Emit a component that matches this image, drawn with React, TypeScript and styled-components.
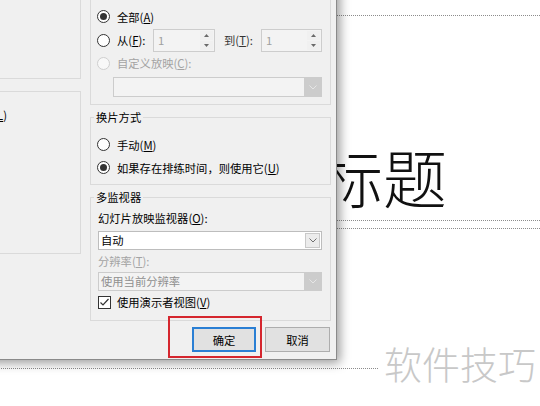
import React from "react";
import styled, { createGlobalStyle } from "styled-components";

const GlobalStyle = createGlobalStyle`
  html, body { margin: 0; padding: 0; background: #fff; }
  body {
    width: 540px; height: 406px; overflow: hidden;
    font-family: "Noto Sans CJK SC", "Noto Sans", sans-serif;
  }
`;

const Page = styled.div`
  position: relative;
  width: 540px;
  height: 406px;
  overflow: hidden;
  background: #fff;
`;

/* ---- slide canvas objects ---- */
const Placeholder = styled.div<{ $top: number; $height: number }>`
  position: absolute;
  left: -100px;
  width: 700px;
  top: ${(p) => p.$top}px;
  height: ${(p) => p.$height}px;
  box-sizing: border-box;
  border: 1px dotted #8c8c8c;
`;

const SlideTitle = styled.div`
  position: absolute;
  left: 319px;
  top: 143px;
  font-size: 64px;
  line-height: 64px;
  font-weight: 300;
  color: #111;
  white-space: nowrap;
  z-index: 1;
`;

const Watermark = styled.div`
  position: absolute;
  left: 378px;
  top: 344px;
  padding: 0 4px 0 6px;
  font-size: 38px;
  line-height: 38px;
  font-weight: 300;
  color: #c8c8c8;
  background: #fff;
  white-space: nowrap;
  z-index: 1;
`;

/* ---- dialog ---- */
const Dialog = styled.div`
  position: absolute;
  left: -300px;
  top: -40px;
  width: 637px;
  height: 400px;
  box-sizing: border-box;
  background: #f0f0f0;
  border: 1px solid #8a8a8a;
  box-shadow: 3px 3px 10px rgba(0, 0, 0, 0.4);
  display: flex;
  flex-direction: column;
  font-size: 11.3px;
  color: #000;
  z-index: 2;
`;

const DialogBody = styled.div`
  display: grid;
  grid-template-columns: 1fr 241px;
  column-gap: 9px;
  padding: 33px 5px 0 0;
`;

const Column = styled.div`
  display: flex;
  flex-direction: column;
  gap: 12px;
`;

const Group = styled.div<{ $height: number; $pad: string }>`
  position: relative;
  box-sizing: border-box;
  height: ${(p) => p.$height}px;
  border: 1px solid #dadada;
  padding: ${(p) => p.$pad};
  display: flex;
  flex-direction: column;
`;

const Legend = styled.span`
  position: absolute;
  top: -8px;
  left: 3px;
  padding: 0 2px;
  line-height: 14px;
  background: #f0f0f0;
  color: #000;
`;

const OptionRow = styled.div<{ $h: number; $end?: boolean; $pr?: number; $mt?: number }>`
  display: flex;
  align-items: center;
  gap: 7px;
  height: ${(p) => p.$h}px;
  margin-top: ${(p) => p.$mt ?? 0}px;
  justify-content: ${(p) => (p.$end ? "flex-end" : "flex-start")};
  padding-right: ${(p) => p.$pr ?? 0}px;
  white-space: nowrap;
`;

const Text = styled.span<{ $disabled?: boolean; $w?: number; $ml?: number; $color?: string }>`
  color: ${(p) => (p.$disabled ? "#a3a3a3" : p.$color ?? "#000")};
  line-height: 16px;
  white-space: nowrap;
  ${(p) => (p.$w ? `width: ${p.$w}px; flex: none;` : "")}
  margin-left: ${(p) => p.$ml ?? 0}px;
`;

const FieldLabel = styled.div<{ $mt: number; $disabled?: boolean }>`
  margin-top: ${(p) => p.$mt}px;
  height: 16px;
  line-height: 16px;
  color: ${(p) => (p.$disabled ? "#a3a3a3" : "#000")};
  white-space: nowrap;
`;

const RadioCircle = styled.span<{ $checked?: boolean; $disabled?: boolean }>`
  width: 13px;
  height: 13px;
  flex: none;
  box-sizing: border-box;
  border-radius: 50%;
  border: 1px solid ${(p) => (p.$disabled ? "#cfcfcf" : "#333")};
  background: ${(p) => (p.$disabled ? "#f8f8f8" : "#fff")};
  display: inline-flex;
  align-items: center;
  justify-content: center;
  &::after {
    content: "";
    width: 7px;
    height: 7px;
    border-radius: 50%;
    background: #333;
    display: ${(p) => (p.$checked ? "block" : "none")};
  }
`;

const CheckBox = styled.span`
  width: 13px;
  height: 13px;
  flex: none;
  box-sizing: border-box;
  border: 1px solid #333;
  background: #fff;
  display: inline-flex;
  align-items: center;
  justify-content: center;
`;

const SpinBox = styled.div<{ $ml?: number; $w: number }>`
  display: flex;
  width: ${(p) => p.$w}px;
  height: 23px;
  flex: none;
  box-sizing: border-box;
  border: 1px solid #cdcdcd;
  background: #f3f3f3;
  margin-left: ${(p) => p.$ml ?? 0}px;
`;

const SpinValue = styled.span`
  flex: 1;
  padding-left: 4px;
  line-height: 21px;
  color: #a0a0a0;
`;

const SpinButtons = styled.div`
  width: 13px;
  display: flex;
  flex-direction: column;
  padding: 1px 1px 1px 0;
  gap: 1px;
`;

const SpinHalf = styled.span`
  flex: 1;
  display: flex;
  align-items: center;
  justify-content: center;
  background: #f0f0f0;
`;

const Combo = styled.div<{ $mt: number; $ml?: number; $disabled?: boolean; $h: number }>`
  display: flex;
  height: ${(p) => p.$h}px;
  box-sizing: border-box;
  margin-top: ${(p) => p.$mt}px;
  margin-left: ${(p) => p.$ml ?? 0}px;
  border: 1px solid ${(p) => (p.$disabled ? "#cccccc" : "#bdbdbd")};
  background: ${(p) => (p.$disabled ? "#f3f3f3" : "#fff")};
`;

const ComboText = styled.span<{ $disabled?: boolean }>`
  flex: 1;
  padding-left: 2px;
  line-height: 17px;
  color: ${(p) => (p.$disabled ? "#8f8f8f" : "#000")};
  white-space: nowrap;
  overflow: hidden;
`;

const DropButton = styled.span<{ $disabled?: boolean }>`
  width: ${(p) => (p.$disabled ? 17 : 15)}px;
  box-sizing: border-box;
  margin: ${(p) => (p.$disabled ? "0" : "1px")};
  display: flex;
  align-items: center;
  justify-content: center;
  background: ${(p) => (p.$disabled ? "#cccccc" : "#ececec")};
  border: ${(p) => (p.$disabled ? "none" : "1px solid #c9c9c9")};
`;

const Footer = styled.div`
  display: flex;
  justify-content: flex-end;
  gap: 9px;
  padding: 6px 6px 7px 0;
`;

const ButtonWrap = styled.span`
  position: relative;
  display: inline-flex;
`;

const Button = styled.button<{ $primary?: boolean; $w: number }>`
  width: ${(p) => p.$w}px;
  height: 25px;
  box-sizing: border-box;
  padding: 0;
  font-family: inherit;
  font-size: 11.3px;
  color: #000;
  background: #e1e1e1;
  border: ${(p) => (p.$primary ? "2px solid #2a7fd4" : "1px solid #adadad")};
`;

const Highlight = styled.span`
  position: absolute;
  left: -24px;
  top: -11px;
  right: -6px;
  bottom: -6px;
  border: 2px solid #d5262e;
  pointer-events: none;
`;

const Chevron = ({ color }: { color: string }) => (
  <svg width="8" height="5" viewBox="0 0 8 5">
    <polyline points="0.5,0.5 4,4 7.5,0.5" fill="none" stroke={color} strokeWidth="1" />
  </svg>
);

const Arrow = ({ up }: { up?: boolean }) => (
  <svg width="5" height="3" viewBox="0 0 5 3">
    <polygon points={up ? "0,3 2.5,0 5,3" : "0,0 2.5,3 5,0"} fill="#6a6a6a" />
  </svg>
);

const Spin = ({ w, ml }: { w: number; ml?: number }) => (
  <SpinBox $w={w} $ml={ml}>
    <SpinValue>1</SpinValue>
    <SpinButtons>
      <SpinHalf>
        <Arrow up />
      </SpinHalf>
      <SpinHalf>
        <Arrow />
      </SpinHalf>
    </SpinButtons>
  </SpinBox>
);

export default function App() {
  return (
    <Page>
      <GlobalStyle />
      <Placeholder $top={15} $height={206} />
      <Placeholder $top={228} $height={141} />
      <SlideTitle>标题</SlideTitle>
      <Watermark>软件技巧</Watermark>

      <Dialog>
        <DialogBody>
          <Column>
            <Group $height={85} $pad="10px 6px 0 6px">
              <Legend>放映类型</Legend>
              <OptionRow $h={23}>
                <RadioCircle $checked />
                <Text>
                  演讲者放映(全屏幕)(<u>P</u>)
                </Text>
              </OptionRow>
              <OptionRow $h={23}>
                <RadioCircle />
                <Text>
                  观众自行浏览(窗口)(<u>B</u>)
                </Text>
              </OptionRow>
              <OptionRow $h={23}>
                <RadioCircle />
                <Text>
                  在展台浏览(全屏幕)(<u>K</u>)
                </Text>
              </OptionRow>
            </Group>
            <Group $height={163} $pad="15px 0 0 6px">
              <Legend>放映选项</Legend>
              <OptionRow $h={16} $end $pr={73}>
                <CheckBox />
                <Text>
                  循环放映，按 ESC 键终止(<u>L</u>)
                </Text>
              </OptionRow>
            </Group>
          </Column>

          <Column>
            <Group $height={111} $pad="10px 8px 0 6px">
              <Legend>放映幻灯片</Legend>
              <OptionRow $h={23}>
                <RadioCircle $checked />
                <Text>
                  全部(<u>A</u>)
                </Text>
              </OptionRow>
              <OptionRow $h={24}>
                <RadioCircle />
                <Text $w={36}>
                  从(<u>F</u>):
                </Text>
                <Spin w={62} ml={-7} />
                <Text $w={37} $ml={2} $color="#333">
                  到(<u>T</u>):
                </Text>
                <Spin w={61} ml={-7} />
              </OptionRow>
              <OptionRow $h={22}>
                <RadioCircle $disabled />
                <Text $disabled>
                  自定义放映(<u>C</u>):
                </Text>
              </OptionRow>
              <Combo $mt={3} $ml={16} $h={20} $disabled>
                <ComboText $disabled />
                <DropButton $disabled>
                  <Chevron color="#e6e6e6" />
                </DropButton>
              </Combo>
            </Group>

            <Group $height={68} $pad="15px 8px 0 6px">
              <Legend>换片方式</Legend>
              <OptionRow $h={23}>
                <RadioCircle />
                <Text>
                  手动(<u>M</u>)
                </Text>
              </OptionRow>
              <OptionRow $h={23}>
                <RadioCircle $checked />
                <Text>
                  如果存在排练时间，则使用它(<u>U</u>)
                </Text>
              </OptionRow>
            </Group>

            <Group $height={124} $pad="12px 8px 0 7px">
              <Legend>多监视器</Legend>
              <FieldLabel $mt={0}>
                幻灯片放映监视器(<u>O</u>):
              </FieldLabel>
              <Combo $mt={5} $h={19}>
                <ComboText>自动</ComboText>
                <DropButton>
                  <Chevron color="#707070" />
                </DropButton>
              </Combo>
              <FieldLabel $mt={3} $disabled>
                分辨率(<u>T</u>):
              </FieldLabel>
              <Combo $mt={3} $h={19} $disabled>
                <ComboText $disabled>使用当前分辨率</ComboText>
                <DropButton $disabled>
                  <Chevron color="#e6e6e6" />
                </DropButton>
              </Combo>
              <OptionRow $h={16} $mt={3}>
                <CheckBox>
                  <svg width="11" height="11" viewBox="0 0 11 11">
                    <polyline points="1.5,5.5 4,8 9.5,2" fill="none" stroke="#333" strokeWidth="1.2" />
                  </svg>
                </CheckBox>
                <Text $ml={-1}>
                  使用演示者视图(<u>V</u>)
                </Text>
              </OptionRow>
            </Group>
          </Column>
        </DialogBody>

        <Footer>
          <ButtonWrap>
            <Button $primary $w={64}>
              确定
            </Button>
            <Highlight />
          </ButtonWrap>
          <Button $w={65}>取消</Button>
        </Footer>
      </Dialog>
    </Page>
  );
}
